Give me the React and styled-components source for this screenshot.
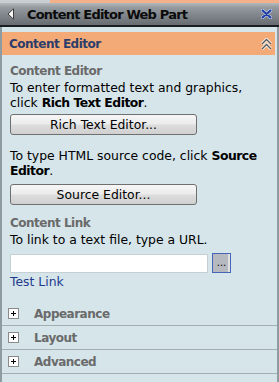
import styled, { createGlobalStyle } from 'styled-components';

const Global = createGlobalStyle`
  html, body { margin: 0; padding: 0; background: #d6e5ea; }
  body { font-family: "DejaVu Sans", sans-serif; }
`;

const Frame = styled.div`
  width: 279px;
  height: 382px;
  overflow: hidden;
  display: flex;
  flex-direction: column;
  background: #d6e5ea;
  & > * { flex-shrink: 0; }
`;

const TopStrip = styled.div`
  height: 3px;
  background: linear-gradient(to right, #c9ced2 0, #c9ced2 50px, #f4b088 50px);
`;

const TitleBar = styled.div`
  height: 22px;
  display: flex;
  align-items: center;
  gap: 12px;
  padding: 0 7px 0 7px;
  background: linear-gradient(to bottom, #b4b9bd 0%, #959a9f 20%, #80868b 55%, #676c71 100%);
  border-bottom: 2px solid #1b1e21;
  font: bold 13px "DejaVu Sans", sans-serif;
  letter-spacing: -0.8px;
  color: #0b0b0b;
`;

const Grow = styled.span`
  flex: 1;
`;

const Panel = styled.div`
  flex: 1 0 auto;
  border-left: 2px solid #8e9ba1;
  border-right: 2px solid #8e9ba1;
  padding-top: 5px;
  display: flex;
  flex-direction: column;
`;

const SectionBar = styled.div`
  height: 23px;
  margin-right: 2px;
  display: flex;
  align-items: center;
  padding: 0 3px 0 7px;
  background: #f4aa76;
  font: bold 12px "DejaVu Sans", sans-serif;
  letter-spacing: -0.5px;
  color: #2b3d6a;
`;

const Body = styled.div`
  padding: 9px 0 0 8px;
  font: 12.4px "DejaVu Sans", sans-serif;
  color: #000;
  line-height: 15px;
`;

const Label = styled.div`
  font-weight: bold;
  font-size: 12px;
  letter-spacing: -0.5px;
  color: #6a6a6a;
  margin-top: ${p => p.$top || 0}px;
  margin-bottom: ${p => p.$bottom || 0}px;
`;

const Text = styled.div`
  margin-top: ${p => p.$top || 0}px;
  b { font-weight: bold; letter-spacing: -0.5px; }
`;

const Button = styled.button`
  display: block;
  width: 187px;
  height: 21px;
  margin-top: ${p => p.$top}px;
  border: 1px solid #6f6f6f;
  border-radius: 3px;
  background: linear-gradient(to bottom, #f6f6f6 0%, #ececec 45%, #dcdcdc 55%, #d0d0d0 100%);
  font: 12.4px "DejaVu Sans", sans-serif;
  color: #000;
  padding: 0;
`;

const InputRow = styled.div`
  display: flex;
  align-items: flex-start;
  gap: 4px;
  margin-top: 6px;
  height: 20px;
`;

const Field = styled.div`
  width: 196px;
  height: 17px;
  margin-top: 1px;
  background: #fff;
  border: 1px solid #c5d0d4;
`;

const Dots = styled.div`
  width: 17px;
  height: 18px;
  border: 1px solid #4465b8;
  background: linear-gradient(to right, #b6b9bf 0, #b6b9bf 15px, #e2e2e2 15px);
  font: 10px "DejaVu Sans", sans-serif;
  line-height: 18px;
  text-align: center;
  color: #000;
`;

const Link = styled.div`
  color: #223a8c;
  margin-top: 1px;
`;

const Groups = styled.div`
  margin-top: 13px;
`;

const Group = styled.div`
  height: 23px;
  display: flex;
  align-items: center;
  gap: 15px;
  padding-left: 6px;
  border-bottom: 1px solid #a3adb2;
  font: bold 12px "DejaVu Sans", sans-serif;
  letter-spacing: -0.5px;
  color: #6a6a6a;
`;

const PlusBox = styled.span`
  width: 9px;
  height: 9px;
  flex-shrink: 0;
  border: 1px solid #8a8a8a;
  background: #fff;
  position: relative;
  &::before, &::after {
    content: '';
    position: absolute;
    background: #000;
  }
  &::before { left: 2px; top: 4px; width: 5px; height: 1px; }
  &::after { left: 4px; top: 2px; width: 1px; height: 5px; }
`;

const Arrow = () => (
  <svg width="8" height="12" viewBox="0 0 8 12">
    <path d="M6.5 0.8 L6.5 11.2 L1 6 Z" fill="#f6f6f6" stroke="#3e3e3e" strokeWidth="1" />
  </svg>
);

const Close = () => (
  <svg width="11" height="10" viewBox="0 0 11 10">
    <path d="M1.5 1.5 L9.5 8.5 M9.5 1.5 L1.5 8.5" stroke="#c3cbe6" strokeWidth="3.6" strokeLinecap="round" />
    <path d="M1.5 1.5 L9.5 8.5 M9.5 1.5 L1.5 8.5" stroke="#1d3ca6" strokeWidth="2" strokeLinecap="round" />
  </svg>
);

const Chevrons = () => (
  <svg width="11" height="12" viewBox="0 0 11 12">
    <path d="M1 6 L5.5 1.5 L10 6 M1 11 L5.5 6.5 L10 11" fill="none" stroke="#fff" strokeWidth="3" />
    <path d="M1 6 L5.5 1.5 L10 6 M1 11 L5.5 6.5 L10 11" fill="none" stroke="#555" strokeWidth="1.4" />
  </svg>
);

export default function App() {
  return (
    <Frame>
      <Global />
      <TopStrip />
      <TitleBar>
        <Arrow />
        <Grow>Content Editor Web Part</Grow>
        <Close />
      </TitleBar>
      <Panel>
        <SectionBar>
          <Grow>Content Editor</Grow>
          <Chevrons />
        </SectionBar>
        <Body>
          <Label>Content Editor</Label>
          <Text $top={1}>To enter formatted text and graphics,<br />click <b>Rich Text Editor</b>.</Text>
          <Button $top={4}>Rich Text Editor...</Button>
          <Text $top={13}>To type HTML source code, click <b>Source</b><br /><b>Editor</b>.</Text>
          <Button $top={6}>Source Editor...</Button>
          <Label $top={11} $bottom={1}>Content Link</Label>
          <Text>To link to a text file, type a URL.</Text>
          <InputRow>
            <Field />
            <Dots>...</Dots>
          </InputRow>
          <Link>Test Link</Link>
        </Body>
        <Groups>
          <Group><PlusBox />Appearance</Group>
          <Group><PlusBox />Layout</Group>
          <Group><PlusBox />Advanced</Group>
        </Groups>
      </Panel>
    </Frame>
  );
}
